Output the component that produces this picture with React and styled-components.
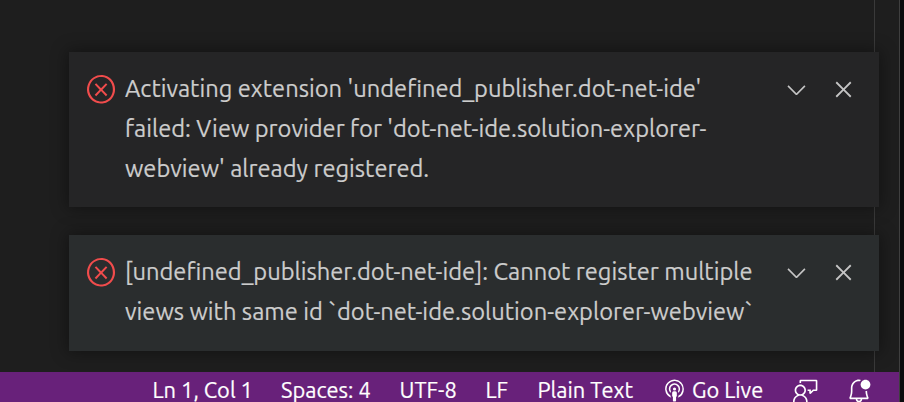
import React from 'react';
import styled, { createGlobalStyle } from 'styled-components';
import {
  VscError,
  VscChevronDown,
  VscClose,
  VscFeedback,
  VscBellDot,
  VscBroadcast,
} from 'react-icons/vsc';

const GlobalStyle = createGlobalStyle`
  * { box-sizing: border-box; }
  body {
    margin: 0;
    background: #1e1e1e;
    overflow: hidden;
    font-family: Ubuntu, "Noto Sans", sans-serif;
  }
`;

const Window = styled.div`
  display: flex;
  width: 904px;
  height: 402px;
  background: #0b0b0d;
  overflow: hidden;
`;

const Workbench = styled.div`
  display: flex;
  flex-direction: column;
  width: 900px;
  background: #1e1e1e;
  border-right: 1px solid #3f3f3f;
`;

const Editor = styled.main`
  display: flex;
  height: 372px;
  flex: none;
`;

const Toasts = styled.section`
  display: flex;
  flex-direction: column;
  gap: 28px;
  width: 874px;
  padding: 52px 0 0 69px;
`;

const Ruler = styled.div`
  width: 25px;
  border-left: 1px solid #3a3a3a;
`;

const Toast = styled.article`
  position: relative;
  display: flex;
  align-items: flex-start;
  width: 810px;
  height: ${(p) => p.$height}px;
  padding: 16px 21px 0 16px;
  background: ${(p) => (p.$focused ? '#2a2d2e' : '#252526')};
  box-shadow: 0 0 15px 2px rgba(0, 0, 0, 0.36);
  color: #cccccc;
`;

const Severity = styled.span`
  display: flex;
  align-items: center;
  width: 40px;
  height: 42px;
  color: #f14c4c;
`;

const Message = styled.div`
  flex: 1;
  font-size: 23.69px;
  line-height: 40px;
  white-space: nowrap;
  -webkit-text-stroke: 0.2px currentColor;
`;

const Line = styled.div``;

const Actions = styled.div`
  display: flex;
  align-items: center;
  gap: 18px;
  height: 42px;
`;

const IconButton = styled.button`
  display: flex;
  padding: 0;
  border: 0;
  background: none;
  color: #c5c5c5;
`;

const StatusBar = styled.footer`
  display: flex;
  height: 38px;
  flex: none;
  padding-left: 152.5px;
  background: #68217a;
  color: #ffffff;
  font-size: 21.84px;
  line-height: 24px;
`;

const StatusItem = styled.span`
  display: flex;
  align-items: center;
  flex: none;
  width: ${(p) => p.$width}px;
  height: ${(p) => (p.$icon ? 37 : 36)}px;
  white-space: nowrap;
  -webkit-text-stroke: 0.2px currentColor;
`;

const toasts = [
  {
    height: 155,
    lines: [
      "Activating extension 'undefined_publisher.dot-net-ide'",
      "failed: View provider for 'dot-net-ide.solution-explorer-",
      "webview' already registered.",
    ],
  },
  {
    height: 116,
    focused: true,
    lines: [
      '[undefined_publisher.dot-net-ide]: Cannot register multiple',
      'views with same id `dot-net-ide.solution-explorer-webview`',
    ],
  },
];

function Notification({ height, focused, lines }) {
  return (
    <Toast $height={height} $focused={focused}>
      <Severity><VscError size={32.5} /></Severity>
      <Message>
        {lines.map((text) => <Line key={text}>{text}</Line>)}
      </Message>
      <Actions>
        <IconButton aria-label="Expand"><VscChevronDown size={29} /></IconButton>
        <IconButton aria-label="Clear"><VscClose size={29} /></IconButton>
      </Actions>
    </Toast>
  );
}

export default function App() {
  return (
    <Window>
      <GlobalStyle />
      <Workbench>
        <Editor>
          <Toasts>
            {toasts.map((t) => <Notification key={t.height} {...t} />)}
          </Toasts>
          <Ruler />
        </Editor>
        <StatusBar>
          <StatusItem $width={128.5}>Ln 1, Col 1</StatusItem>
          <StatusItem $width={118.5}>Spaces: 4</StatusItem>
          <StatusItem $width={86}>UTF-8</StatusItem>
          <StatusItem $width={52}>LF</StatusItem>
          <StatusItem $width={124.5}>Plain Text</StatusItem>
          <StatusItem $width={30} $icon><VscBroadcast size={25} /></StatusItem>
          <StatusItem $width={101}>Go Live</StatusItem>
          <StatusItem $width={53} $icon><VscFeedback size={26} /></StatusItem>
          <StatusItem $width={30} $icon><VscBellDot size={26} /></StatusItem>
        </StatusBar>
      </Workbench>
    </Window>
  );
}
